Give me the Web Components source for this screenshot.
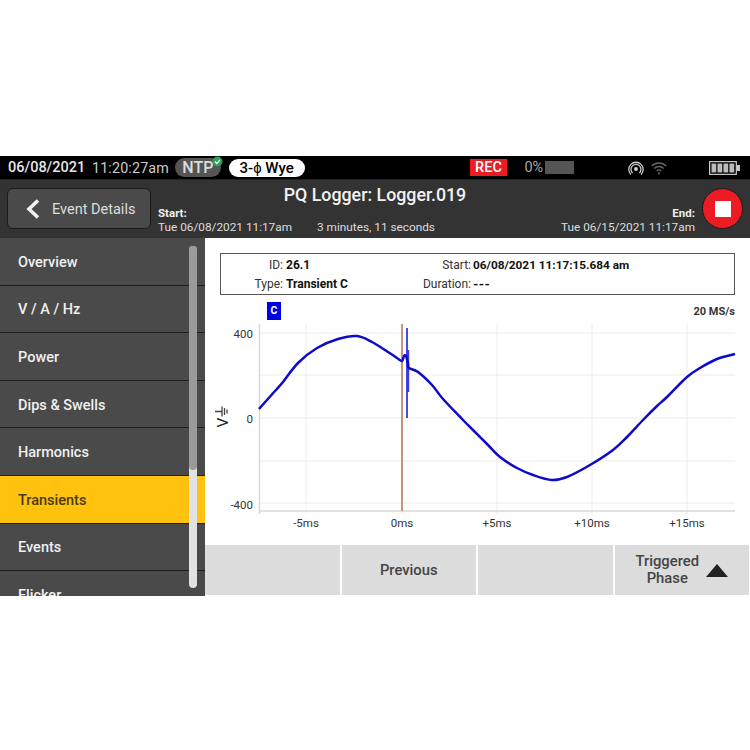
<!DOCTYPE html>
<html>
<head>
<meta charset="utf-8">
<style>
  html, body { margin: 0; background: #fff; font-family: Roboto, "Liberation Sans", sans-serif; }
  #screen { margin-top: 156px; width: 750px; height: 440px; display: flex; flex-direction: column; }
  #main { display: flex; flex: 1; min-height: 0; }
  #content { flex: 1; display: flex; flex-direction: column; min-width: 0; }
</style>
</head>
<body>
<div id="screen">
  <pq-status-bar></pq-status-bar>
  <pq-header></pq-header>
  <div id="main">
    <pq-sidebar>
      <pq-nav-item>Overview</pq-nav-item>
      <pq-nav-item>V / A / Hz</pq-nav-item>
      <pq-nav-item>Power</pq-nav-item>
      <pq-nav-item>Dips &amp; Swells</pq-nav-item>
      <pq-nav-item>Harmonics</pq-nav-item>
      <pq-nav-item active>Transients</pq-nav-item>
      <pq-nav-item>Events</pq-nav-item>
      <pq-nav-item>Flicker</pq-nav-item>
    </pq-sidebar>
    <div id="content">
      <pq-info-box></pq-info-box>
      <pq-chart></pq-chart>
      <pq-softkeys>
        <pq-softkey></pq-softkey>
        <pq-softkey>Previous</pq-softkey>
        <pq-softkey></pq-softkey>
        <pq-softkey arrow>Triggered<br>Phase</pq-softkey>
      </pq-softkeys>
    </div>
  </div>
</div>

<script>
class PqStatusBar extends HTMLElement {
  constructor() {
    super();
    this.attachShadow({ mode: 'open' }).innerHTML = `
<style>
:host { display: flex; align-items: center; height: 24px; box-sizing: border-box; background: #000; color: #ddd; padding: 0 10px 0 8px; font-size: 14.500px; border-bottom: 1px solid #222; flex: none; white-space: nowrap; }
.date { font-weight: 500; color: #e6e6e6; width: 77px; margin-right: 7px; }
.time { color: #ccc; width: 77px; margin-right: 6px; font-size: 14.300px; letter-spacing: .15px; }
.ntp { position: relative; background: #555; color: #ddd; font-weight: 500; font-size: 16px; border-radius: 10px; width: 46px; height: 19px; line-height: 19px; text-align: center; margin-right: 8px; box-sizing: border-box; padding-right: 0; }
.ntp svg { position: absolute; right: -2px; top: -2px; }
.mode { background: #fff; color: #000; font-weight: 500; font-size: 15px; border-radius: 10px; width: 76px; height: 18px; line-height: 18px; text-align: center; }
.rec { margin-left: 165px; background: #ed1c24; color: #fff; font-weight: 500; font-size: 14.500px; width: 38px; height: 17px; line-height: 17px; text-align: center; }
.pct { margin-left: 17px; color: #aaa; font-size: 14.500px; width: 21px; }
.bar { width: 29px; height: 13px; background: #555; }
.ic { display: block; }
.air { margin-left: 54px; }
.wifi { margin-left: 7px; }
.batt { margin-left: 42px; }
</style>
<span class="date">06/08/2021</span><span class="time">11:20:27am</span>
<span class="ntp">NTP<svg width="11" height="11" viewBox="0 0 11 11"><circle cx="5.500" cy="5.500" r="5" fill="#2e9e5b"/><path d="M3 5.600l1.800 1.800L8 3.900" fill="none" stroke="#e8ffe8" stroke-width="1.400"/></svg></span>
<span class="mode">3-ϕ Wye</span>
<span class="rec">REC</span>
<span class="pct">0%</span><span class="bar"></span>
<svg class="ic air" width="16" height="16" viewBox="0 0 16 16" fill="none" stroke="#ccc" stroke-width="1.300"><circle cx="8" cy="9" r="2" fill="#ccc" stroke="none"/><path d="M4.600 13a5 5 0 1 1 6.800 0"/><path d="M2.900 14.500a7.200 7.200 0 1 1 10.200 0"/></svg>
<svg class="ic wifi" width="16" height="14" viewBox="0 0 16 14" fill="none" stroke="#666" stroke-width="1.400"><path d="M.8 5a10 10 0 0 1 14.400 0"/><path d="M3.200 7.600a6.600 6.600 0 0 1 9.600 0"/><path d="M5.600 10a3.200 3.200 0 0 1 4.800 0"/><circle cx="8" cy="12.300" r="1.100" fill="#666" stroke="none"/></svg>
<svg class="ic batt" width="31" height="14" viewBox="0 0 31 14"><rect x=".6" y=".6" width="26.800" height="12.800" fill="none" stroke="#ccc" stroke-width="1.200"/><rect x="28" y="4" width="3" height="6" fill="#ccc"/><g fill="#bbb"><rect x="2.500" y="2.500" width="4.800" height="9"/><rect x="8.500" y="2.500" width="4.800" height="9"/><rect x="14.500" y="2.500" width="4.800" height="9"/><rect x="20.500" y="2.500" width="4.800" height="9"/></g></svg>`;
  }
}

class PqHeader extends HTMLElement {
  constructor() {
    super();
    this.attachShadow({ mode: 'open' }).innerHTML = `
<style>
:host { display: flex; height: 58px; box-sizing: border-box; background: #333; color: #eee; padding: 8px 7px 0 7px; flex: none; }
.back { flex: none; width: 144px; height: 41px; box-sizing: border-box; background: #4a4a4a; border: 1px solid #1a1a1a; border-radius: 6px; display: flex; align-items: center; padding-left: 17px; gap: 11px; font-size: 14.500px; color: #ddd; }
.back span { padding-top: 2px; }
.mid { flex: 1; margin-left: 7px; margin-top: -4px; display: flex; flex-direction: column; }
.title { font-size: 17.800px; font-weight: 500; line-height: 22px; color: #f2f2f2; margin-right: 110px; text-align: center; }
.times { display: flex; align-items: flex-end; font-size: 11.800px; line-height: 14px; color: #ddd; margin-right: 7px; margin-top: 1px; white-space: nowrap; }
b { display: block; font-weight: 700; font-size: 11.500px; line-height: 13px; color: #eee; }
.dur { margin-left: 25px; }
.end { text-align: right; margin-left: auto; }
.stop { flex: none; width: 41px; height: 41px; box-sizing: border-box; border-radius: 50%; background: #ed1c24; border: 1px solid #1a1a1a; display: flex; align-items: center; justify-content: center; }
.stop i { display: block; width: 16px; height: 16px; background: #fff; }
</style>
<div class="back"><svg width="16" height="22" viewBox="0 0 16 22"><path d="M13 2.500L4 11l9 8.500" fill="none" stroke="#f2f2f2" stroke-width="3.600"/></svg><span>Event Details</span></div>
<div class="mid">
  <div class="title">PQ Logger: Logger.019</div>
  <div class="times">
    <div><b>Start:</b>Tue 06/08/2021 11:17am</div>
    <div class="dur">3 minutes, 11 seconds</div>
    <div class="end"><b>End:</b>Tue 06/15/2021 11:17am</div>
  </div>
</div>
<div class="stop"><i></i></div>`;
  }
}

class PqSidebar extends HTMLElement {
  constructor() {
    super();
    this.attachShadow({ mode: 'open' }).innerHTML = `
<style>
:host { display: block; position: relative; width: 205px; flex: none; overflow: hidden; background: #4a4a4a; }
.track { position: absolute; left: 189px; top: 8px; width: 8px; height: 342px; border-radius: 4px; background: #e2e2e2; }
.thumb { width: 8px; height: 224px; border-radius: 4px; background: #9a9a9a; }
</style>
<slot></slot>
<div class="track"><div class="thumb"></div></div>`;
  }
}

class PqNavItem extends HTMLElement {
  constructor() {
    super();
    this.attachShadow({ mode: 'open' }).innerHTML = `
<style>
:host { display: flex; align-items: center; height: 47.600px; box-sizing: border-box; padding: 2px 0 0 18px; font-size: 14.500px; font-weight: 500; color: #f0f0f0; background: #4a4a4a; border-bottom: 1px solid #1e1e1e; }
:host([active]) { background: #ffc20e; color: #4a3c10; }
</style>
<slot></slot>`;
  }
}

class PqInfoBox extends HTMLElement {
  constructor() {
    super();
    this.attachShadow({ mode: 'open' }).innerHTML = `
<style>
:host { display: grid; grid-template-columns: 62px 120px 62px 1fr; column-gap: 3px; align-content: center; row-gap: 5px; margin: 15px 15px 0; height: 42px; box-sizing: border-box; border: 1px solid #555; font-size: 12px; line-height: 14px; color: #333; flex: none; }
.l { text-align: right; white-space: nowrap; }
.v { font-weight: 700; color: #111; white-space: nowrap; }
.when { font-size: 11.800px; margin-left: -1px; }
.dash { font-size: 13.500px; letter-spacing: .4px; margin-left: -1px; }
</style>
<span class="l">ID:</span><span class="v">26.1</span><span class="l">Start:</span><span class="v when">06/08/2021 11:17:15.684 am</span>
<span class="l">Type:</span><span class="v">Transient C</span><span class="l">Duration:</span><span class="v dash">---</span>`;
  }
}

const CURVE = [[259,409],[267,400],[275,391],[283,382],[298,363],[317,348],[338,339],[357,336],[372,342],[388,352],[397,358],[402,361],
  [404,356],[406,356],[408,364],[409,368],[418,372],[432,385],[443,399],[463,420],[472,429],[488,445],[500,457],[517,468],[533,475],
  [552,480],[567,477],[590,465],[613,450],[627,437],[643,420],[657,406],[667,397],[687,377],[700,368],[717,359],[735,354]];

class PqChart extends HTMLElement {
  constructor() {
    super();
    const root = this.attachShadow({ mode: 'open' });
    const hLines = [333, 375, 418, 461, 503].map((y) => `<path d="M259 ${y}H735"/>`).join('');
    const vLines = [306, 402, 497, 592, 687].map((x) => `<path d="M${x} 324V514"/>`).join('');
    const xLabels = [[306,'-5ms'],[402,'0ms'],[497,'+5ms'],[592,'+10ms'],[687,'+15ms']]
      .map(([x, t]) => `<text x="${x}" y="527" text-anchor="middle">${t}</text>`).join('');
    const yLabels = [[338,'400'],[423,'0'],[509,'-400']]
      .map(([y, t]) => `<text x="253" y="${y}" text-anchor="end">${t}</text>`).join('');
    root.innerHTML = `
<style>
:host { display: block; flex: 1; min-height: 0; position: relative; }
.top { display: flex; justify-content: space-between; align-items: center; height: 18px; margin: 7px 15px 0 62px; }
.chan { width: 14px; height: 18px; line-height: 18px; text-align: center; background: #0000e6; color: #fff; font-size: 10.500px; font-weight: 700; }
.rate { font-size: 11px; font-weight: 700; color: #333; }
svg { display: block; position: absolute; left: 0; top: 0; }
text { font-size: 11.500px; fill: #333; }
.grid path { stroke: #ececec; stroke-width: 1; fill: none; }
.ax path { stroke: #d8d8d8; stroke-width: 1.500; fill: none; }
</style>
<div class="top"><span class="chan">C</span><span class="rate">20 MS/s</span></div>
<svg width="545" height="250" viewBox="205 295 545 250">
  <g class="grid">${hLines}${vLines}</g>
  <g class="ax"><path d="M259.500 324V514"/><path d="M259 511H735"/></g>
  ${yLabels}${xLabels}
  <text transform="translate(227.500 427.500) rotate(-90)" style="font-size:15.500px;fill:#222">V</text>
  <path d="M215 411.500H222M222 406.500V416.500M224.500 408V415M227 409.500V413.500" stroke="#444" stroke-width="1.300" fill="none"/>
  <path d="M402 324V511" stroke="#bf8a70" stroke-width="1.800"/>
  <path d="M407 328V418" stroke="#4a4ae6" stroke-width="2" fill="none"/>
  <path d="M408 350V392" stroke="#3a3ae0" stroke-width="2.400" fill="none"/>
  <path d="${this._smooth(CURVE)}" stroke="#0c0cc8" stroke-width="2.500" fill="none" stroke-linejoin="round"/>
</svg>`;
  }

  // catmull-rom to bezier, the sampled points alone look faceted
  _smooth(pts) {
    let d = 'M' + pts[0].join(' ');
    for (let i = 0; i < pts.length - 1; i++) {
      const p0 = pts[Math.max(i - 1, 0)], p1 = pts[i], p2 = pts[i + 1], p3 = pts[Math.min(i + 2, pts.length - 1)];
      const c1 = [p1[0] + (p2[0] - p0[0]) / 6, p1[1] + (p2[1] - p0[1]) / 6];
      const c2 = [p2[0] - (p3[0] - p1[0]) / 6, p2[1] - (p3[1] - p1[1]) / 6];
      d += `C${c1[0].toFixed(1)} ${c1[1].toFixed(1)} ${c2[0].toFixed(1)} ${c2[1].toFixed(1)} ${p2[0]} ${p2[1]}`;
    }
    return d;
  }
}

class PqSoftkeys extends HTMLElement {
  constructor() {
    super();
    this.attachShadow({ mode: 'open' }).innerHTML = `
<style>
:host { display: grid; grid-template-columns: repeat(4, 1fr); column-gap: 2px; height: 50px; margin-bottom: 1px; padding-right: 1px; flex: none; background: #fff; }
</style>
<slot></slot>`;
  }
}

class PqSoftkey extends HTMLElement {
  constructor() {
    super();
    const arrow = this.hasAttribute('arrow');
    this.attachShadow({ mode: 'open' }).innerHTML = `
<style>
:host { display: flex; align-items: center; justify-content: center; gap: 7px; background: #dcdcdc; color: #444; font-size: 14.800px; font-weight: 500; line-height: 17px; text-align: center; }
</style>
<span class="t"><slot></slot></span>
${arrow ? '<svg width="22" height="13" viewBox="0 0 22 13"><path d="M11 0L22 13H0z" fill="#222"/></svg>' : ''}`;
  }
}

customElements.define('pq-status-bar', PqStatusBar);
customElements.define('pq-header', PqHeader);
customElements.define('pq-sidebar', PqSidebar);
customElements.define('pq-nav-item', PqNavItem);
customElements.define('pq-info-box', PqInfoBox);
customElements.define('pq-chart', PqChart);
customElements.define('pq-softkeys', PqSoftkeys);
customElements.define('pq-softkey', PqSoftkey);
</script>
</body>
</html>
